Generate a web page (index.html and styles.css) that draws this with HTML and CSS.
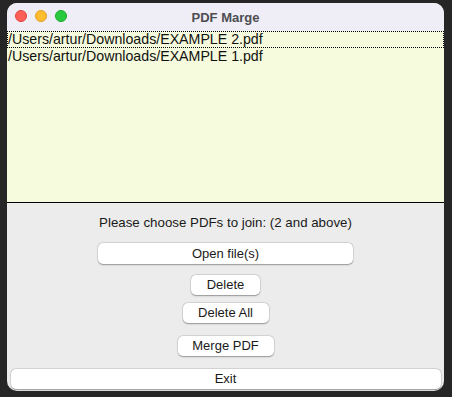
FILE: index.html
```html
<!DOCTYPE html>
<html>
<head>
<meta charset="utf-8">
<link rel="stylesheet" href="styles.css">
</head>
<body>
<div class="window">
  <div class="titlebar">
    <div class="lights">
      <span class="light red"></span>
      <span class="light yellow"></span>
      <span class="light green"></span>
    </div>
    <div class="title">PDF Marge</div>
  </div>
  <div class="listbox">
    <div class="item focused">/Users/artur/Downloads/EXAMPLE 2.pdf</div>
    <div class="item">/Users/artur/Downloads/EXAMPLE 1.pdf</div>
  </div>
  <div class="controls">
    <div class="label">Please choose PDFs to join: (2 and above)</div>
    <button class="btn open">Open file(s)</button>
    <button class="btn del">Delete</button>
    <button class="btn delall">Delete All</button>
    <button class="btn merge">Merge PDF</button>
    <button class="btn exit">Exit</button>
  </div>
</div>
</body>
</html>
```
FILE: styles.css
```css
html, body {
  margin: 0;
  padding: 0;
  background: #262626;
  width: 452px;
  height: 397px;
  overflow: hidden;
}
body {
  font-family: "Liberation Sans", Arial, sans-serif;
}
.window {
  margin: 3px 0 0 7px;
  width: 437px;
  height: 388px;
  border-radius: 10px;
  overflow: hidden;
  background: #ececec;
  display: flex;
  flex-direction: column;
}
.titlebar {
  height: 28px;
  background: #efedf5;
  position: relative;
  display: flex;
  align-items: center;
  justify-content: center;
}
.lights {
  position: absolute;
  left: 8px;
  top: 7px;
  display: flex;
  gap: 8px;
}
.light {
  width: 12px;
  height: 12px;
  border-radius: 50%;
  box-sizing: border-box;
}
.red { background: #ff5f57; border: 0.5px solid #e0443e; }
.yellow { background: #febc2e; border: 0.5px solid #dea123; }
.green { background: #28c840; border: 0.5px solid #1aab29; }
.title {
  font-weight: bold;
  font-size: 13px;
  color: #4d4d52;
}
.listbox {
  height: 171px;
  background: #f5fbdc;
  border-bottom: 1px solid #000;
}
.item {
  height: 17px;
  line-height: 17px;
  font-size: 14.2px;
  color: #111;
  padding-left: 1px;
  box-sizing: border-box;
  white-space: nowrap;
}
.item.focused {
  border: 1px dotted #000;
  line-height: 15px;
  padding-left: 0;
}
.controls {
  flex: 1;
  display: flex;
  flex-direction: column;
  align-items: center;
}
.label {
  margin-top: 12px;
  font-size: 13.3px;
  line-height: 16px;
  color: #1a1a1a;
}
.btn {
  font-family: "Liberation Sans", Arial, sans-serif;
  font-size: 13px;
  color: #1a1a1a;
  background: #fff;
  border: none;
  border-radius: 5px;
  box-shadow: 0 0.5px 1.5px rgba(0,0,0,0.35), 0 0 0 0.5px rgba(0,0,0,0.08);
  height: 21px;
  padding: 0;
  line-height: 21px;
}
.open { margin-top: 12px; width: 255px; }
.del { margin-top: 11px; width: 69px; height: 20px; line-height: 20px; }
.delall { margin-top: 8px; width: 86px; height: 20px; line-height: 20px; }
.merge { margin-top: 13px; width: 96px; height: 20px; line-height: 20px; }
.exit { margin-top: 13px; width: 430px; height: 20px; line-height: 20px; }
```
